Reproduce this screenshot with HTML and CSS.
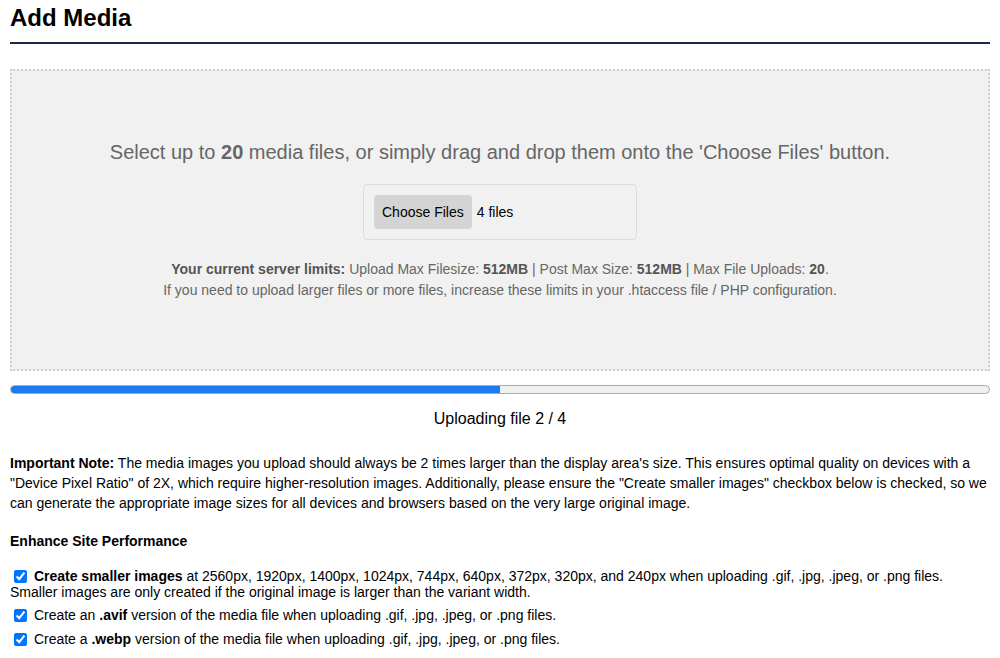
FILE: index.html
```html
<!DOCTYPE html>
<html lang="en">
<head>
<meta charset="utf-8">
<title>Add Media</title>
<link rel="stylesheet" href="styles.css">
</head>
<body>
<div class="page">
  <h1 class="title">Add Media</h1>
  <div class="dropzone">
    <p class="lead">Select up to <b>20</b> media files, or simply drag and drop them onto the 'Choose Files' button.</p>
    <div class="filebox">
      <span class="filebtn">Choose Files</span>
      <span class="filecount">4 files</span>
    </div>
    <p class="limits"><b>Your current server limits:</b> Upload Max Filesize: <b>512MB</b> | Post Max Size: <b>512MB</b> | Max File Uploads: <b>20</b>.<br>If you need to upload larger files or more files, increase these limits in your .htaccess file / PHP configuration.</p>
  </div>
  <div class="progress"><div class="progress-fill" style="width:50%"></div></div>
  <p class="status">Uploading file 2 / 4</p>
  <p class="note"><b>Important Note:</b> The media images you upload should always be 2 times larger than the display area's size. This ensures optimal quality on devices with a "Device Pixel Ratio" of 2X, which require higher-resolution images. Additionally, please ensure the "Create smaller images" checkbox below is checked, so we can generate the appropriate image sizes for all devices and browsers based on the very large original image.</p>
  <h2 class="subhead">Enhance Site Performance</h2>
  <div class="option"><label><input type="checkbox" checked> <b>Create smaller images</b> at 2560px, 1920px, 1400px, 1024px, 744px, 640px, 372px, 320px, and 240px when uploading .gif, .jpg, .jpeg, or .png files.<br>Smaller images are only created if the original image is larger than the variant width.</label></div>
  <div class="option option-tight"><label><input type="checkbox" checked> Create an <b>.avif</b> version of the media file when uploading .gif, .jpg, .jpeg, or .png files.</label></div>
  <div class="option"><label><input type="checkbox" checked> Create a <b>.webp</b> version of the media file when uploading .gif, .jpg, .jpeg, or .png files.</label></div>
</div>
</body>
</html>
```

FILE: styles.css
```css
html, body {
  margin: 0;
  padding: 0;
  background: #fff;
}
body {
  font-family: "Liberation Sans", Arial, sans-serif;
  color: #000;
}
.page {
  padding: 4px 10px 0 10px;
}
.title {
  margin: 0;
  font-size: 24px;
  line-height: 28px;
  font-weight: bold;
  padding-bottom: 10px;
  border-bottom: 2px solid #1c2a48;
}
.dropzone {
  margin-top: 25px;
  border: 2px dotted #cfcfcf;
  background: #f1f1f1;
  padding: 69px 20px 68px;
  text-align: center;
}
.lead {
  margin: 0;
  font-size: 20px;
  line-height: 24px;
  color: #666;
}
.filebox {
  display: flex;
  align-items: center;
  gap: 5px;
  width: 274px;
  box-sizing: border-box;
  margin: 20px auto 0;
  padding: 10px;
  border: 1px solid #dcdcdc;
  border-radius: 4px;
  text-align: left;
}
.filebtn {
  display: inline-block;
  height: 34px;
  line-height: 34px;
  padding: 0 8px;
  background: #d4d4d4;
  border-radius: 4px;
  font-size: 14px;
  color: #000;
}
.filecount {
  font-size: 14px;
  color: #000;
}
.limits {
  margin: 19px 0 0;
  font-size: 14px;
  line-height: 21px;
  color: #666;
}
.limits b {
  color: #555;
}
.progress {
  margin-top: 14px;
  height: 9px;
  border: 1px solid #aaa;
  border-radius: 5px;
  background: #f0f0f0;
  overflow: hidden;
  box-sizing: border-box;
}
.progress-fill {
  height: 100%;
  background: #1e7bef;
}
.status {
  margin: 16px 0 0;
  text-align: center;
  font-size: 16px;
  line-height: 18px;
}
.note {
  margin: 25px 0 0;
  font-size: 14px;
  line-height: 20px;
}
.subhead {
  margin: 20px 0 0;
  font-size: 14px;
  line-height: 16px;
  font-weight: bold;
}
.option {
  font-size: 14px;
  line-height: 16px;
  margin-top: 8px;
}
.option-tight {
  margin-top: 7px;
}
.subhead + .option {
  margin-top: 19px;
}
.option input {
  margin: 0 3px 0 4px;
  width: 13px;
  height: 13px;
  vertical-align: -2px;
}
```
